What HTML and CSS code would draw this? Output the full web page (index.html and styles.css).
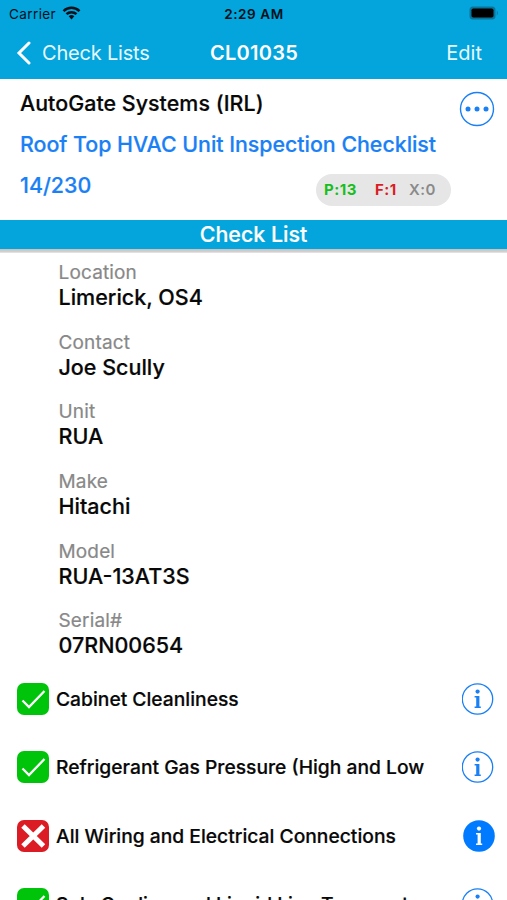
FILE: index.html
```html
<!DOCTYPE html>
<html lang="en">
<head>
<meta charset="utf-8">
<title>CL01035</title>
<link rel="stylesheet" href="styles.css">
</head>
<body>
<svg class="defs" width="0" height="0" aria-hidden="true">
  <symbol id="pass" viewBox="0 0 32 32"><rect width="32" height="32" rx="7" fill="#00c40a"/><path d="M5.500 17.500L12 24L27.500 8" fill="none" stroke="#fff" stroke-width="2.300"/></symbol>
  <symbol id="fail" viewBox="0 0 32 32"><rect width="32" height="32" rx="7" fill="#dc1c24"/><path d="M6 6L26.500 26M26.500 6L6 26" fill="none" stroke="#fff" stroke-width="5"/></symbol>
  <symbol id="info" viewBox="0 0 32 32"><circle cx="15.500" cy="16" r="15.200" fill="none" stroke="#1a80f5" stroke-width="1.300"/><circle cx="15.600" cy="8.600" r="2.100" fill="#1a80f5"/><path d="M12.600 13H17.400V23.500H18.800V25H12.600V23.500H14.200V14.400H12.600Z" fill="#1a80f5"/></symbol>
  <symbol id="info-on" viewBox="0 0 32 32"><circle cx="16" cy="16" r="15.800" fill="#007aff"/><circle cx="16" cy="8.600" r="2.100" fill="#fff"/><path d="M13 13H17.800V23.500H19.200V25H13V23.500H14.600V14.400H13Z" fill="#fff"/></symbol>
</svg>
<div class="screen">
  <header class="top">
    <div class="status">
      <span class="carrier"><span class="carrier-name">Carrier</span>
        <svg class="wifi" viewBox="0 0 18 14"><g fill="none" stroke="#001018" stroke-width="2.500"><path d="M1 5.100A11.400 11.400 0 0 1 17 5.100"/><path d="M4 8.200A7.100 7.100 0 0 1 14 8.200"/></g><path d="M6.200 10.300A4 4 0 0 1 11.800 10.300L9 13.400Z" fill="#001018"/></svg>
      </span>
      <span class="time">2:29 AM</span>
      <svg class="battery" viewBox="0 0 30 14"><rect x=".5" y=".5" width="26" height="13" rx="3.500" fill="#087499"/><rect x="2.500" y="2.500" width="22" height="9" rx="1.800" fill="#000"/><path d="M27.800 4.500Q30 7 27.800 9.500Z" fill="#087499"/></svg>
    </div>
    <nav class="nav">
      <span class="back"><svg class="chevron" viewBox="0 0 15 24"><path d="M13 2L3 12L13 22" fill="none" stroke="#fff" stroke-width="3" stroke-linecap="round"/></svg><span class="back-text">Check Lists</span></span>
      <span class="nav-title">CL01035</span>
      <span class="edit">Edit</span>
    </nav>
  </header>
  <section class="summary">
    <div class="line"><span class="company">AutoGate Systems (IRL)</span>
      <svg class="more" viewBox="0 0 36 36"><circle cx="18" cy="18" r="16.500" fill="none" stroke="#1a80f5" stroke-width="1.400"/><g fill="#1a80f5"><circle cx="9" cy="18" r="2.500"/><circle cx="18" cy="18" r="2.500"/><circle cx="27" cy="18" r="2.500"/></g></svg></div>
    <div class="line"><span class="form">Roof Top HVAC Unit Inspection Checklist</span></div>
    <div class="line"><span class="count">14/230</span>
      <span class="score"><b class="p">P:13</b><b class="f">F:1</b><b class="x">X:0</b></span></div>
  </section>
  <div class="banner"><span class="banner-text">Check List</span></div>
  <dl class="fields">
    <div class="field"><dt>Location</dt><dd>Limerick, OS4</dd></div>
    <div class="field"><dt>Contact</dt><dd>Joe Scully</dd></div>
    <div class="field"><dt>Unit</dt><dd>RUA</dd></div>
    <div class="field"><dt>Make</dt><dd>Hitachi</dd></div>
    <div class="field"><dt>Model</dt><dd>RUA-13AT3S</dd></div>
    <div class="field"><dt>Serial#</dt><dd>07RN00654</dd></div>
  </dl>
  <ul class="checks">
    <li><svg class="mark"><use href="#pass"/></svg><span class="label">Cabinet Cleanliness</span><svg class="info"><use href="#info"/></svg></li>
    <li><svg class="mark"><use href="#pass"/></svg><span class="label">Refrigerant Gas Pressure (High and Low</span><svg class="info"><use href="#info"/></svg></li>
    <li><svg class="mark"><use href="#fail"/></svg><span class="label">All Wiring and Electrical Connections</span><svg class="info on"><use href="#info-on"/></svg></li>
    <li><svg class="mark"><use href="#pass"/></svg><span class="label">Sub-Cooling and Liquid Line Temperature</span><svg class="info"><use href="#info"/></svg></li>
  </ul>
</div>
</body>
</html>
```
FILE: styles.css
```css
* { box-sizing: border-box; }
body, dl, dd, ul { margin: 0; padding: 0; }
body { background: #fff; overflow: hidden; font-family: Inter, "Liberation Sans", sans-serif; color: #080808; }
svg { display: block; flex: none; }
.defs { position: absolute; }
.screen { width: 507px; height: 900px; overflow: hidden; }
.top { height: 79px; background: #04a4dc; }
.status { height: 27px; display: grid; grid-template-columns: 1fr auto 1fr; align-items: center; padding: 0 8px 0 9px; font-size: 13.500px; color: #001018; }
.carrier { display: flex; align-items: center; gap: 6px; }
.carrier-name { letter-spacing: .4px; }
.wifi { width: 19px; height: 14px; margin-top: -2px; }
.time { font-weight: 600; letter-spacing: .6px; }
.battery { width: 30px; height: 14px; justify-self: end; margin-top: -1px; }
.nav { height: 52px; display: grid; grid-template-columns: 1fr auto 1fr; align-items: center; padding: 0 25px 0 16px; font-size: 20px; color: #e6f9ff; }
.back { display: flex; align-items: center; gap: 11px; }
.back-text { letter-spacing: -.2px; }
.chevron { width: 15px; height: 24px; margin-top: -1px; }
.nav-title { font-weight: 600; color: #fff; letter-spacing: .25px; margin-left: 10px; }
.edit { justify-self: end; }
.summary { height: 141px; padding: 4px 12px 0 20px; font-size: 21.400px; font-weight: 500; color: #1a80f5; -webkit-text-stroke: .2px; }
.line { height: 41px; display: flex; justify-content: space-between; align-items: center; white-space: nowrap; }
.company, .form, .count { padding-bottom: 2px; }
.company { color: #080808; letter-spacing: .04px; }
.form { letter-spacing: -.03px; }
.more { width: 36px; height: 36px; margin-top: 11px; }
.score { width: 135px; height: 32px; border-radius: 16px; margin: 8px 44px 0 0; padding-left: 8px; background: #e6e6e6; display: flex; align-items: center; font-size: 15px; letter-spacing: .5px; -webkit-text-stroke: 0; }
.score b { font-weight: 700; }
.p { width: 51px; color: #17be20; }
.f { width: 34px; color: #dc1c24; }
.score .x { color: #8a8a8a; font-weight: 600; }
.banner { height: 33px; display: flex; align-items: center; justify-content: center; background: linear-gradient(#04a4dc 28.500px, #c2c2c2 29px, #d6d2d2 32px, #eee 33px); padding-bottom: 6px; color: #fff; font-size: 21.400px; font-weight: 500; -webkit-text-stroke: .2px; }
.fields { padding: 8px 0 0 58.500px; height: 411.500px; }
.field { height: 69.700px; }
dt { font-size: 19px; line-height: 24px; color: #888; letter-spacing: .15px; -webkit-text-stroke: .2px #888; }
dd { font-size: 21.500px; line-height: 26px; margin-top: -1px; font-weight: 500; -webkit-text-stroke: .2px; }
.checks { list-style: none; }
.checks li { height: 68.500px; padding: 0 13px 0 17px; display: flex; align-items: center; }
.mark { width: 32px; height: 32px; margin-right: 7px; }
.label { flex: 1; font-size: 19.250px; font-weight: 500; white-space: nowrap; -webkit-text-stroke: .2px; }
.info { width: 32px; height: 32px; }
.info.on { margin-right: -1px; }
```
